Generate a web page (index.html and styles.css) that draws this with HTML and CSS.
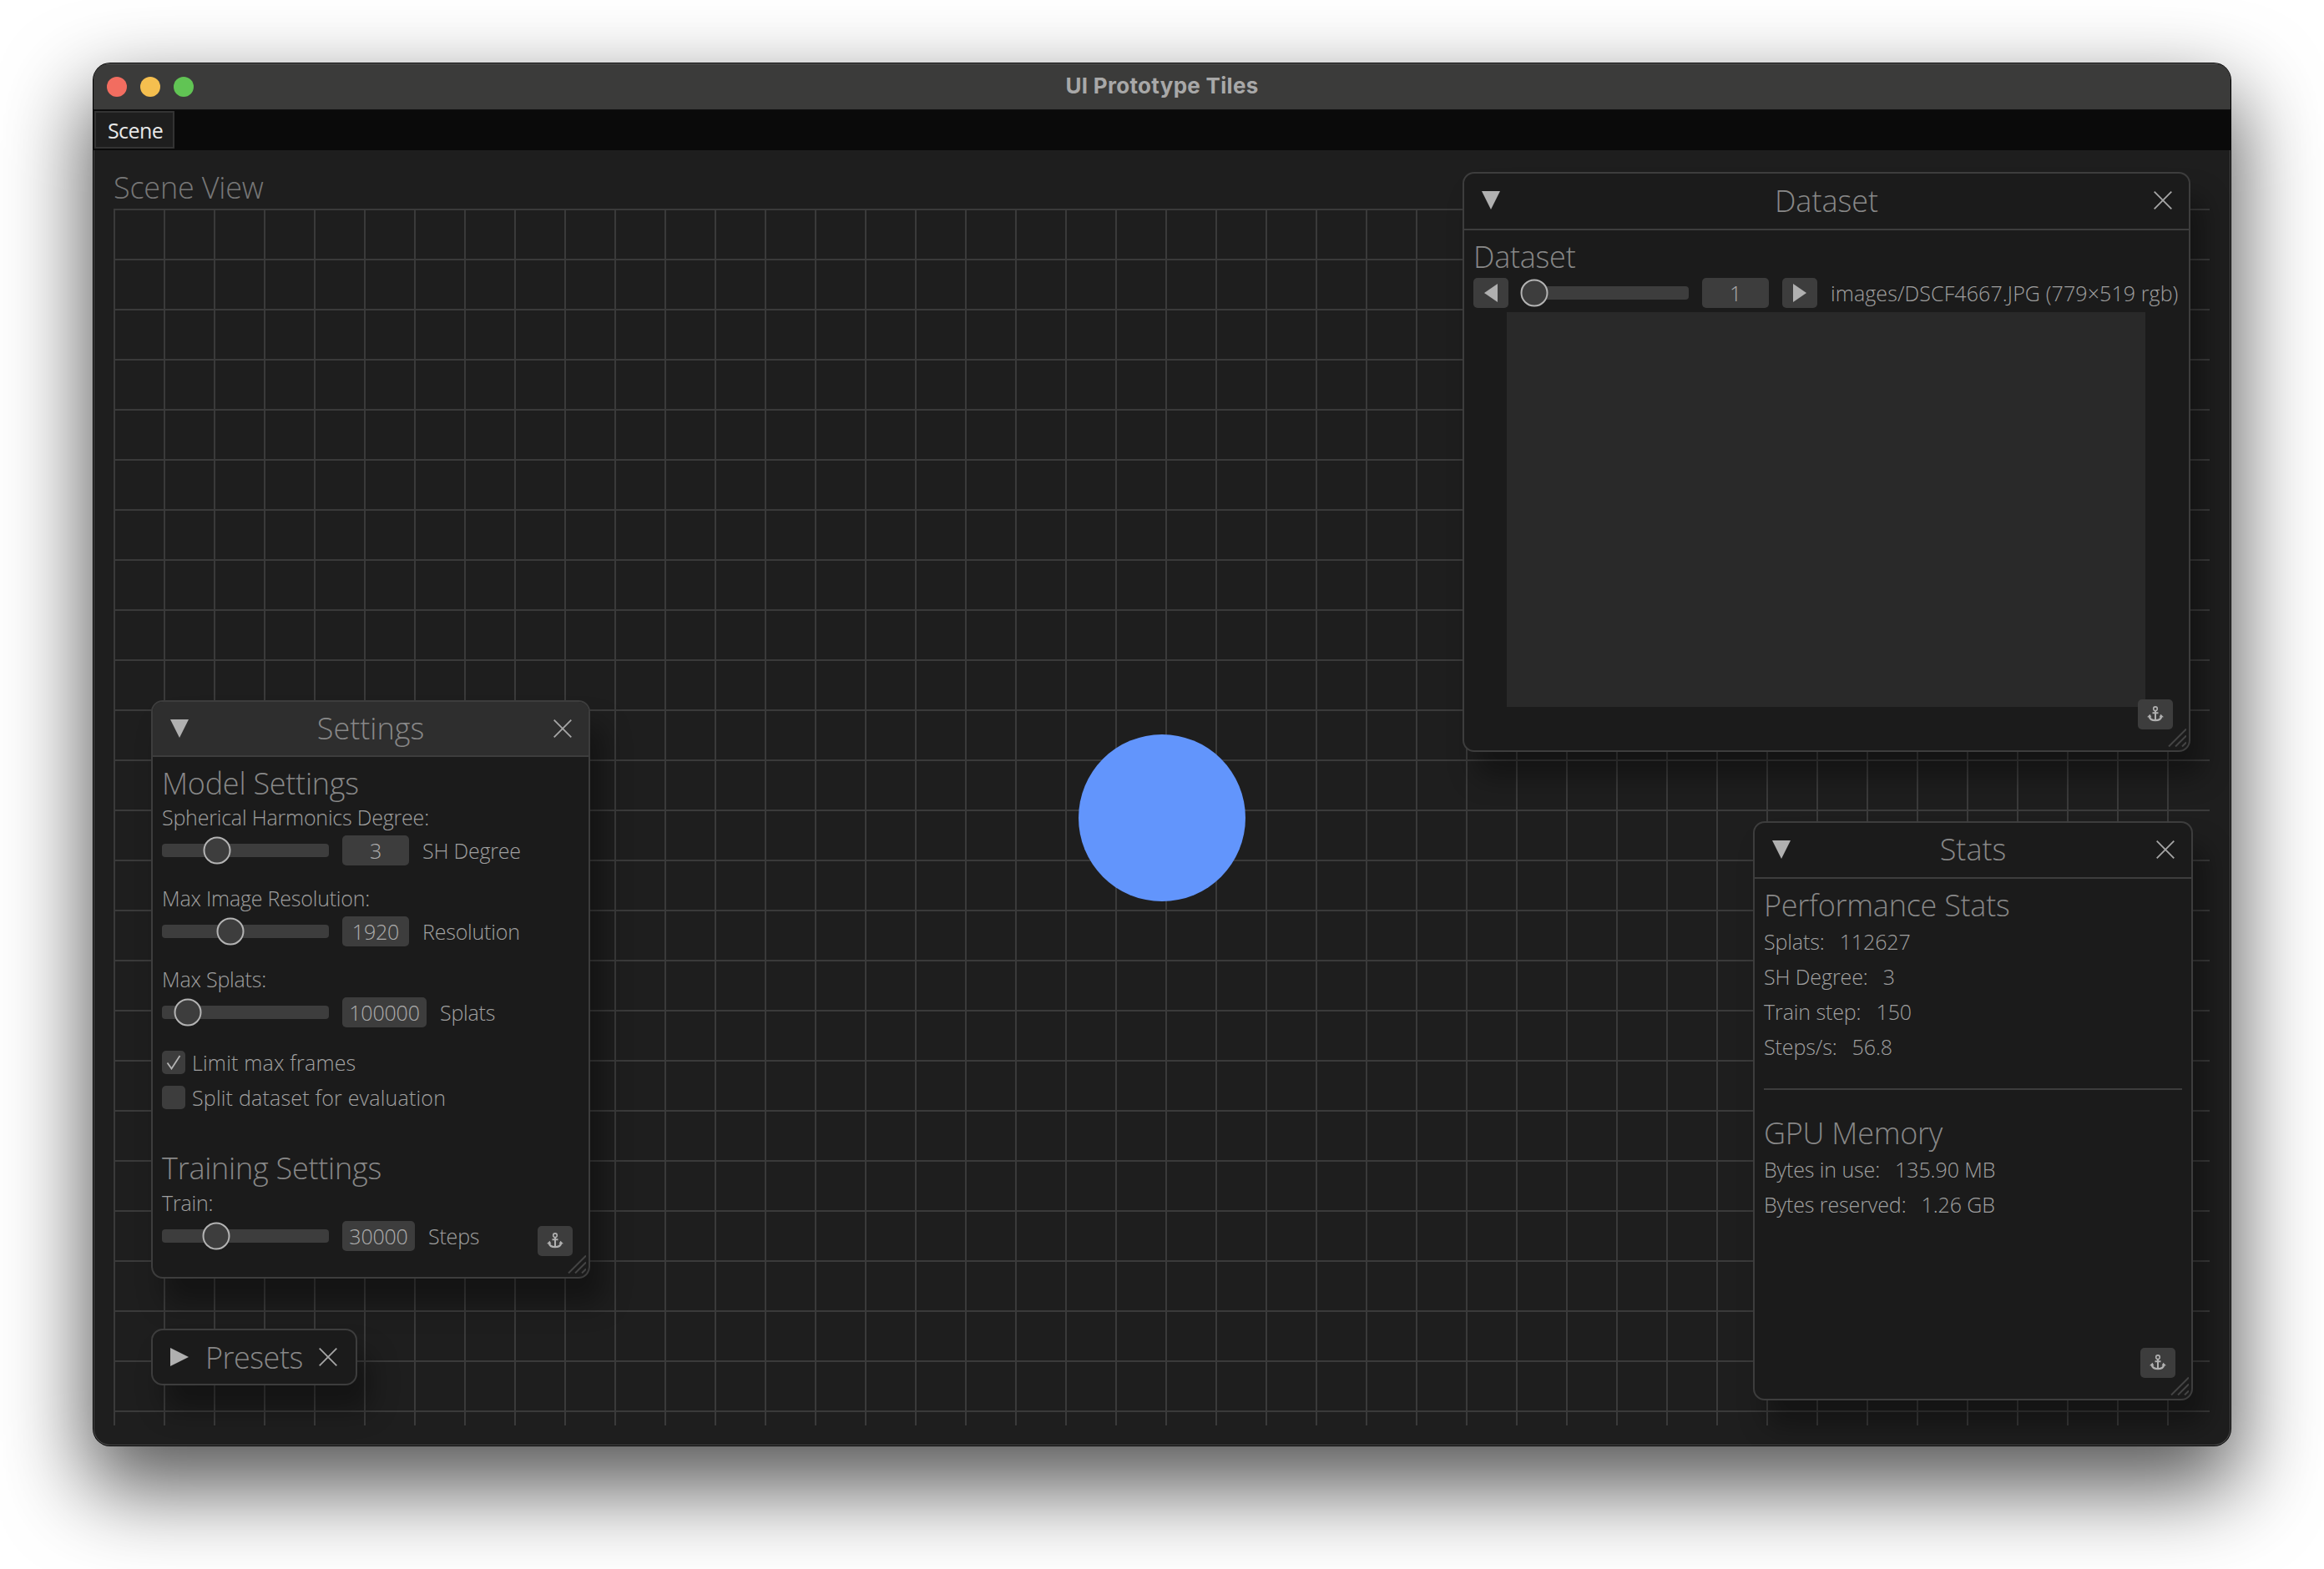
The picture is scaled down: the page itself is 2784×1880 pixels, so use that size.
FILE: index.html
```html
<!DOCTYPE html>
<html lang="en">

<head>
    <meta charset="UTF-8">
    <meta name="viewport" content="width=device-width, initial-scale=1.0">
    <title>UI Prototype Tiles</title>
    <link rel="stylesheet" href="styles.css">
</head>

<body>
    <svg class="icon-defs" width="0" height="0">
        <defs>
            <symbol id="anchor" viewBox="0 0 20 20">
                <circle cx="10" cy="3.2" r="2.3" fill="none" stroke="currentColor" stroke-width="1.6" />
                <path d="M10 5.5V18M6.5 8.2H13.5" fill="none" stroke="currentColor" stroke-width="2" />
                <path d="M2.6 12.2C3.2 15.4 6 17.2 10 17.2S16.8 15.4 17.4 12.2" fill="none" stroke="currentColor" stroke-width="2.2" />
                <path d="M0 13.2L3.6 9.8L5.4 13.6ZM20 13.2L16.4 9.8L14.6 13.6Z" fill="currentColor" />
            </symbol>
            <symbol id="close" viewBox="0 0 22 22">
                <path d="M.7.7L21.3 21.3M21.3.7L.7 21.3" fill="none" stroke="currentColor" stroke-width="1.8" />
            </symbol>
            <symbol id="grip" viewBox="0 0 22 22">
                <path d="M1 21.5L22 .5M9 21.5L22 8.5M17 21.5L22 16.5" fill="none" stroke="currentColor" stroke-width="2" />
            </symbol>
        </defs>
    </svg>

    <div class="window">
        <header class="titlebar">
            <div class="lights">
                <span class="light light-red"></span>
                <span class="light light-yellow"></span>
                <span class="light light-green"></span>
            </div>
            <div class="window-title">UI Prototype Tiles</div>
        </header>

        <nav class="tabbar">
            <div class="tab">Scene</div>
        </nav>

        <main class="scene">
            <div class="scene-title">Scene View</div>
            <div class="grid"></div>
        </main>

        <div class="circle"></div>

        <!-- Dataset -->
        <section class="panel panel-dataset">
            <div class="panel-head">
                <svg class="arrow" viewBox="0 0 22 22"><path d="M0 0H22L11 22Z" /></svg>
                <div class="panel-title">Dataset</div>
                <svg class="close"><use href="#close" /></svg>
            </div>
            <div class="panel-body">
                <h2 class="heading heading-dataset">Dataset</h2>
                <div class="row row-dataset">
                    <div class="step-btn"><svg class="step-arrow" viewBox="0 0 16 22"><path d="M16 0V22L0 11Z" /></svg></div>
                    <div class="slider slider-dataset"><span class="knob" style="left: 16px"></span></div>
                    <div class="value">1</div>
                    <div class="step-btn step-next"><svg class="step-arrow" viewBox="0 0 16 22"><path d="M0 0V22L16 11Z" /></svg></div>
                    <div class="row-label file-label">images/DSCF4667.JPG (779×519 rgb)</div>
                </div>
                <div class="image-box"></div>
            </div>
            <div class="dock"><svg class="dock-icon"><use href="#anchor" /></svg></div>
            <svg class="grip"><use href="#grip" /></svg>
        </section>

        <!-- Stats -->
        <section class="panel panel-stats">
            <div class="panel-head">
                <svg class="arrow" viewBox="0 0 22 22"><path d="M0 0H22L11 22Z" /></svg>
                <div class="panel-title">Stats</div>
                <svg class="close"><use href="#close" /></svg>
            </div>
            <div class="panel-body">
                <h2 class="heading">Performance Stats</h2>
                <div class="stat"><span>Splats:</span><span>112627</span></div>
                <div class="stat"><span>SH Degree:</span><span>3</span></div>
                <div class="stat"><span>Train step:</span><span>150</span></div>
                <div class="stat"><span>Steps/s:</span><span>56.8</span></div>
                <hr class="divider">
                <h2 class="heading">GPU Memory</h2>
                <div class="stat"><span>Bytes in use:</span><span>135.90 MB</span></div>
                <div class="stat"><span>Bytes reserved:</span><span>1.26 GB</span></div>
            </div>
            <div class="dock"><svg class="dock-icon"><use href="#anchor" /></svg></div>
            <svg class="grip"><use href="#grip" /></svg>
        </section>

        <!-- Settings -->
        <section class="panel panel-settings">
            <div class="panel-head">
                <svg class="arrow" viewBox="0 0 22 22"><path d="M0 0H22L11 22Z" /></svg>
                <div class="panel-title">Settings</div>
                <svg class="close"><use href="#close" /></svg>
            </div>
            <div class="panel-body">
                <h2 class="heading">Model Settings</h2>
                <div class="field">
                    <div class="field-label">Spherical Harmonics Degree:</div>
                    <div class="row">
                        <div class="slider"><span class="knob" style="left: 66px"></span></div>
                        <div class="value">3</div>
                        <div class="row-label">SH Degree</div>
                    </div>
                </div>
                <div class="field">
                    <div class="field-label">Max Image Resolution:</div>
                    <div class="row">
                        <div class="slider"><span class="knob" style="left: 82px"></span></div>
                        <div class="value">1920</div>
                        <div class="row-label">Resolution</div>
                    </div>
                </div>
                <div class="field">
                    <div class="field-label">Max Splats:</div>
                    <div class="row">
                        <div class="slider"><span class="knob" style="left: 31px"></span></div>
                        <div class="value value-splats">100000</div>
                        <div class="row-label">Splats</div>
                    </div>
                </div>
                <div class="check-list">
                    <div class="check-row">
                        <span class="checkbox"><svg class="tick" viewBox="0 0 18 18"><path d="M1.5 9.5L6.5 16.5L16.5 1" /></svg></span>
                        <span>Limit max frames</span>
                    </div>
                    <div class="check-row">
                        <span class="checkbox"></span>
                        <span>Split dataset for evaluation</span>
                    </div>
                </div>
                <h2 class="heading heading-train">Training Settings</h2>
                <div class="field">
                    <div class="field-label">Train:</div>
                    <div class="row">
                        <div class="slider"><span class="knob" style="left: 65px"></span></div>
                        <div class="value value-steps">30000</div>
                        <div class="row-label">Steps</div>
                    </div>
                </div>
            </div>
            <div class="dock"><svg class="dock-icon"><use href="#anchor" /></svg></div>
            <svg class="grip"><use href="#grip" /></svg>
        </section>

        <!-- Presets, collapsed -->
        <section class="panel panel-presets">
            <svg class="arrow" viewBox="0 0 22 22"><path d="M0 0L22 11L0 22Z" /></svg>
            <div class="presets-title">Presets</div>
            <svg class="close"><use href="#close" /></svg>
        </section>
    </div>
</body>

</html>
```

FILE: styles.css
```css
* {
    box-sizing: border-box;
}

body {
    margin: 0;
    padding: 76px 112px 148px 112px;
    background-color: #fff;
    font-family: "Open Sans", "Noto Sans", sans-serif;
    font-weight: 300;
    font-size: 25px;
    letter-spacing: -0.2px;
    color: #a0a0a0;
}

.icon-defs {
    display: block;
}

.window {
    position: relative;
    height: 1656px;
    display: flex;
    flex-direction: column;
    overflow: hidden;
    border-radius: 20px;
    background-color: #1e1e1e;
    box-shadow: 0 0 0 1px #000, inset 0 0 0 1px #4a4a4a, 0 44px 100px 8px rgba(0, 0, 0, 0.65);
}

.titlebar {
    position: relative;
    flex: none;
    height: 56px;
    padding-bottom: 3px;
    display: flex;
    align-items: center;
    justify-content: center;
    background-color: #3b3b3a;
    border-top: 1px solid #5a5a5a;
    border-bottom: 1px solid #111;
}

.lights {
    position: absolute;
    left: 16px;
    top: 15px;
    display: flex;
    gap: 16px;
}

.light {
    width: 24px;
    height: 24px;
    border-radius: 50%;
}

.light-red {
    background-color: #f26d60;
}

.light-yellow {
    background-color: #f5bf4f;
}

.light-green {
    background-color: #61c454;
}

.window-title {
    font-family: Inter, sans-serif;
    font-weight: 700;
    font-size: 26px;
    letter-spacing: 0.3px;
    color: #a8a8a8;
}

.tabbar {
    flex: none;
    height: 48px;
    padding: 1px 0 2px 1px;
    background-color: #0a0a0a;
}

.tab {
    width: 96px;
    height: 45px;
    padding-left: 14px;
    line-height: 42px;
    background-color: #1e1e1e;
    border: 2px solid #333;
    color: #e8e8e8;
    font-weight: 400;
    letter-spacing: -0.6px;
}

.scene {
    flex: 1;
    display: flex;
    flex-direction: column;
    padding: 22px 25px 24px 24px;
}

.scene-title {
    flex: none;
    height: 48px;
    line-height: 46px;
    font-size: 36px;
    letter-spacing: -0.2px;
    color: #777;
}

.grid {
    flex: 1;
    background-image:
        linear-gradient(to right, #3a3a3a 2px, transparent 2px),
        linear-gradient(to bottom, #3a3a3a 2px, transparent 2px);
    background-size: 60px 60px;
}

/* the blue dot in the middle of the scene */
.circle {
    position: absolute;
    left: 1180px;
    top: 804px;
    width: 200px;
    height: 200px;
    border-radius: 50%;
    background-color: #6295fc;
}

.panel {
    position: absolute;
    display: flex;
    flex-direction: column;
    background-color: #1b1b1b;
    border: 2px solid #3d3d3d;
    border-radius: 14px;
    box-shadow: 16px 30px 32px rgba(0, 0, 0, 0.35);
}

.panel-dataset {
    left: 1640px;
    top: 130px;
    width: 872px;
    height: 695px;
}

.panel-stats {
    left: 1988px;
    top: 908px;
    width: 527px;
    height: 694px;
}

.panel-settings {
    left: 69px;
    top: 763px;
    width: 526px;
    height: 693px;
}

.panel-presets {
    left: 69px;
    top: 1516px;
    width: 247px;
    height: 68px;
    flex-direction: row;
    align-items: center;
    padding-left: 21px;
}

.panel-head {
    flex: none;
    position: relative;
    height: 67px;
    padding-bottom: 1px;
    display: flex;
    align-items: center;
    justify-content: center;
    border-bottom: 2px solid #3d3d3d;
    border-radius: 12px 12px 0 0;
}

.panel-dataset .panel-head {
    height: 68px;
}

.panel-settings .panel-head {
    height: 66px;
    background-color: #2e2e2e;
}

.panel-title {
    font-size: 36px;
    line-height: 44px;
    letter-spacing: 0;
    color: #888;
}

.arrow {
    flex: none;
    width: 22px;
    height: 22px;
    fill: #b0b0b0;
}

.panel-head .arrow {
    position: absolute;
    left: 21px;
    top: 21px;
}

.close {
    flex: none;
    width: 22px;
    height: 22px;
    color: #a6a6a6;
}

.panel-head .close {
    position: absolute;
    right: 20px;
    top: 21px;
}

.panel-body {
    flex: 1;
    padding: 11px 11px 0;
}

.heading {
    margin: 0 0 3px;
    height: 40px;
    line-height: 42px;
    font-size: 36px;
    font-weight: 300;
    letter-spacing: -0.25px;
    color: #888;
}

.field {
    margin-bottom: 21px;
}

.field-label {
    height: 36px;
    line-height: 36px;
    margin-bottom: 4px;
}

.row {
    height: 36px;
    display: flex;
    align-items: center;
}

.slider {
    position: relative;
    flex: none;
    width: 200px;
    height: 16px;
    margin-right: 16px;
    border-radius: 4px;
    background-color: #3d3d3d;
}

.knob {
    position: absolute;
    top: 8px;
    width: 33px;
    height: 33px;
    transform: translate(-50%, -50%);
    border: 2px solid #b4b4b4;
    border-radius: 50%;
    background-color: #3d3d3d;
}

.value {
    flex: none;
    width: 80px;
    height: 36px;
    line-height: 36px;
    text-align: center;
    border-radius: 5px;
    background-color: #3d3d3d;
    color: #adadad;
}

.value-splats {
    width: 101px;
}

.value-steps {
    width: 87px;
}

.row-label {
    margin-left: 16px;
    white-space: nowrap;
}

.check-list {
    margin: 5px 0 43px;
}

.check-row {
    height: 42px;
    display: flex;
    align-items: center;
    gap: 8px;
    letter-spacing: 0.2px;
}

.checkbox {
    flex: none;
    width: 28px;
    height: 28px;
    display: flex;
    align-items: center;
    justify-content: center;
    border-radius: 5px;
    background-color: #3d3d3d;
}

.tick {
    width: 18px;
    height: 18px;
    fill: none;
    stroke: #b4b4b4;
    stroke-width: 1.8;
}

.dock {
    position: absolute;
    right: 19px;
    bottom: 25px;
    width: 42px;
    height: 36px;
    display: flex;
    align-items: center;
    justify-content: center;
    border-radius: 5px;
    background-color: #3d3d3d;
}

.dock-icon {
    width: 20px;
    height: 20px;
    color: #b0b0b0;
}

.grip {
    position: absolute;
    right: 3px;
    bottom: 4px;
    width: 22px;
    height: 22px;
    color: #444;
}

.heading-train {
    margin-bottom: 4px;
}

/* dataset panel */
.heading-dataset {
    margin-bottom: 6px;
}

.step-btn {
    flex: none;
    width: 42px;
    height: 36px;
    display: flex;
    align-items: center;
    justify-content: center;
    border-radius: 5px;
    background-color: #3d3d3d;
}

.step-next {
    margin-left: 16px;
}

.step-arrow {
    width: 16px;
    height: 22px;
    fill: #b0b0b0;
}

.slider-dataset {
    width: 201px;
    margin-left: 15px;
}

.file-label {
    letter-spacing: 0.1px;
}

.image-box {
    width: 765px;
    height: 473px;
    margin: 5px 0 0 40px;
    background-color: #292929;
}

/* stats panel */
.stat {
    height: 42px;
    line-height: 40px;
    display: flex;
    gap: 18px;
    letter-spacing: -0.1px;
}

.panel-stats .heading {
    margin-bottom: 4px;
}

.divider {
    height: 2px;
    margin: 28px 0 31px;
    border: none;
    background-color: #3d3d3d;
}

/* presets */
.presets-title {
    width: 136px;
    margin-left: 20px;
    padding-top: 1px;
    font-size: 36px;
    letter-spacing: -0.5px;
    color: #888;
}
```
